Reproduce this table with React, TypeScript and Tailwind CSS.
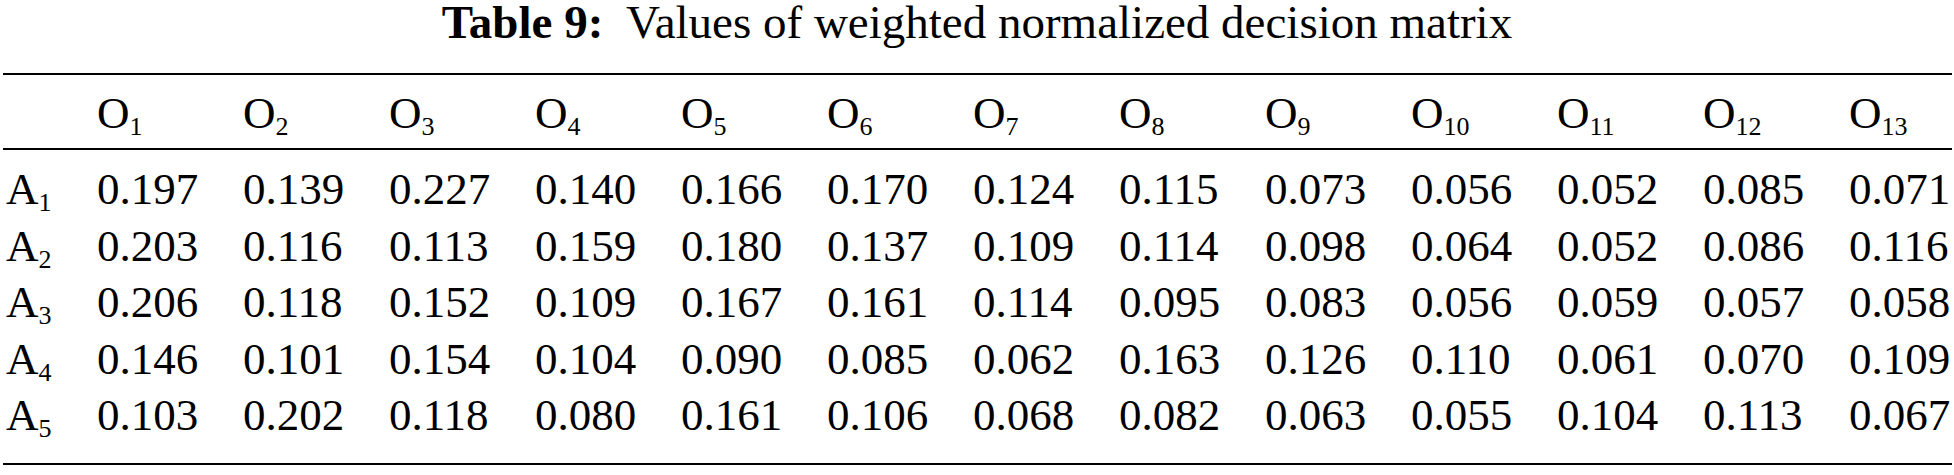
import React from "react";

const cols = ["1","2","3","4","5","6","7","8","9","10","11","12","13"];
const rows: [string, string[]][] = [
  ["1", ["0.197","0.139","0.227","0.140","0.166","0.170","0.124","0.115","0.073","0.056","0.052","0.085","0.071"]],
  ["2", ["0.203","0.116","0.113","0.159","0.180","0.137","0.109","0.114","0.098","0.064","0.052","0.086","0.116"]],
  ["3", ["0.206","0.118","0.152","0.109","0.167","0.161","0.114","0.095","0.083","0.056","0.059","0.057","0.058"]],
  ["4", ["0.146","0.101","0.154","0.104","0.090","0.085","0.062","0.163","0.126","0.110","0.061","0.070","0.109"]],
  ["5", ["0.103","0.202","0.118","0.080","0.161","0.106","0.068","0.082","0.063","0.055","0.104","0.113","0.067"]],
];

function Sym({ l, s }: { l: string; s: string }) {
  return (
    <span className="whitespace-nowrap">
      {l}
      <span className="text-[26px] leading-none align-[-7px]">{s}</span>
    </span>
  );
}

export default function App() {
  return (
    <div className="w-[1954px] h-[475px] bg-white text-black font-[Liberation_Serif,Times_New_Roman,serif]">
      <div className="h-[44px] text-center text-[47px] leading-[44px] whitespace-nowrap">
        <span className="font-bold">Table 9:</span>
        <span>&nbsp; Values of weighted normalized decision matrix</span>
      </div>
      <div className="mx-[3px] mt-[29px] w-[1949px] border-t-2 border-b-2 border-black">
        <div className="grid grid-cols-[91px_repeat(13,146px)] pl-[3px] pt-[3px] h-[75px] text-[45px] leading-[70px] border-b-2 border-black">
          <div />
          {cols.map((c) => (
            <div key={c}>
              <Sym l="O" s={c} />
            </div>
          ))}
        </div>
        <div className="pt-[11px] pb-[19px]">
          {rows.map(([a, vals]) => (
            <div key={a} className="grid grid-cols-[91px_repeat(13,146px)] pl-[3px] h-[56.5px] text-[45px] leading-[56.5px]">
              <div>
                <Sym l="A" s={a} />
              </div>
              {vals.map((v, i) => (
                <div key={i}>{v}</div>
              ))}
            </div>
          ))}
        </div>
      </div>
    </div>
  );
}
